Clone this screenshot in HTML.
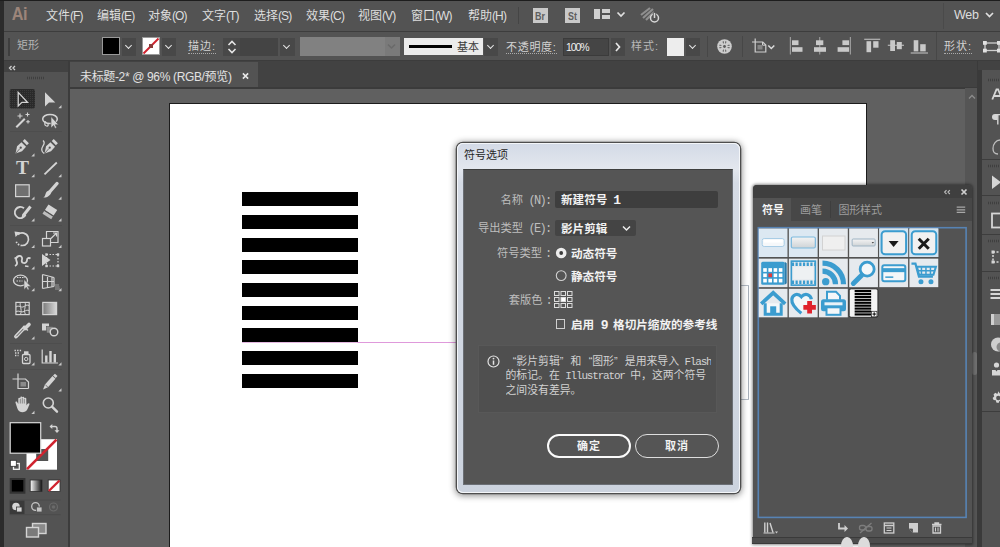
<!DOCTYPE html>
<html lang="zh-CN">
<head>
<meta charset="utf-8">
<title>Illustrator - 符号选项</title>
<style>
html,body{margin:0;padding:0;}
body{width:1000px;height:547px;overflow:hidden;background:#5e5e5e;position:relative;
 font-family:"Liberation Sans","Noto Sans CJK SC",sans-serif;font-size:12px;color:#dcdcdc;}
.abs{position:absolute;}
.t{position:absolute;white-space:nowrap;line-height:1;}
svg{position:absolute;overflow:visible;}
/* ---------- frame ---------- */
#menubar{left:0;top:0;width:1000px;height:31px;background:#535353;}
#ctrlbar{left:0;top:31px;width:1000px;height:30px;background:#535353;border-top:1px solid #3d3d3d;box-sizing:border-box;}
#tabbar{left:68px;top:61px;width:932px;height:27px;background:#424242;}
#doctab{left:70px;top:62px;width:188px;height:26px;background:#535353;}
#canvas{left:70px;top:88px;width:895px;height:459px;background:#606060;}
#artboard{left:168.500px;top:102.500px;width:696.800px;height:460px;background:#fff;border:1px solid #1c1c1c;}
#toolbar{left:4px;top:61px;width:64px;height:486px;background:#535353;}
#toolhead{left:4px;top:61px;width:64px;height:11px;background:#424242;}
.mi{top:10px;font-size:12px;color:#dedede;}
.la{font-size:12px;letter-spacing:-0.9px;}
.cl{font-size:11px;color:#d2d2d2;top:40px;letter-spacing:1px;}
.dd{position:absolute;top:38px;width:14px;height:18px;background:#484848;}
.dd:after{content:"";position:absolute;left:4px;top:5px;width:4px;height:4px;border-right:1.6px solid #e6e6e6;border-bottom:1.6px solid #e6e6e6;transform:rotate(45deg);}
.bar{position:absolute;left:242.3px;width:115.3px;height:14.2px;background:#000;}
/* ---------- dialog ---------- */
#dlg{left:456.500px;top:142.500px;width:283.500px;height:350px;border-radius:6px;background:linear-gradient(#d3dae6,#e3e7ee 26px,#d5dbe5 40px,#ccd3de);
 box-shadow:0 0 0 1.300px #4e4e4e,inset 0 0 0 1px #f4f6f9,0 1px 6px 1.500px rgba(0,0,0,.42);}
#dlgin{left:463px;top:169px;width:270px;height:316px;background:#555;border:1px solid #6b6f75;border-top-color:#3e3e3e;box-sizing:border-box;}
.dl{font-size:11.250px;color:#bebebe;}
.dv{font-size:11.600px;color:#f2f2f2;font-weight:bold;}
.mn{font-family:"Liberation Mono",monospace;font-size:12px;letter-spacing:-1.700px;line-height:0;}
.dv .mn{font-size:13px;letter-spacing:-2px;}
.di{font-size:10.850px;line-height:14.300px;color:#d2d2d2;white-space:nowrap;}
.di .mn{font-size:11px;letter-spacing:-1.180px;line-height:0;}
.di .q{display:inline-block;width:10.850px;text-align:right;}
.di .q.l{text-align:left;}
.btn{position:absolute;top:434.300px;height:23.500px;box-sizing:border-box;border-radius:12px;color:#f2f2f2;text-align:center;line-height:20px;font-size:11px;font-weight:bold;letter-spacing:1px;}
/* ---------- symbols panel ---------- */
#sp{left:752.500px;top:185px;width:219px;height:358.500px;background:#535353;border-radius:4px 4px 0 0;box-shadow:0 0 3px 0.5px rgba(0,0,0,.45);}
#sphead{left:752.500px;top:185px;width:219px;height:13.500px;background:#3f3f3f;border-radius:4px 4px 0 0;}
#sptabs{left:752.500px;top:198px;width:219px;height:23px;background:#474747;}
#sptab1{left:752.500px;top:198px;width:38.500px;height:23px;background:#535353;}
.cell{position:absolute;width:28.5px;height:28.5px;background:#e9e9e9;}
/* ---------- dock ---------- */
#dockgap{left:977px;top:61px;width:5px;height:486px;background:#3a3a3a;}
#dock{left:982px;top:70px;width:18px;height:477px;background:#535353;}
</style>
</head>
<body>
<!-- FRAME -->
<div class="abs" id="canvas"></div>
<div class="abs" id="artboard"></div>
<div class="abs" id="menubar"></div>
<div class="abs" id="ctrlbar"></div>
<div class="abs" id="tabbar"></div>
<div class="abs" id="doctab"></div>
<div class="abs" id="toolbar"></div>
<div class="abs" id="toolhead"></div>
<div class="abs" style="left:0;top:0;width:4px;height:547px;background:#2b2b2b"></div>
<div class="abs" style="left:0;top:0;width:1000px;height:1px;background:#1d1d1d"></div>
<div class="abs" style="left:70px;top:87.300px;width:908px;height:1.400px;background:#3b3b3b"></div>
<div class="abs" style="left:4px;top:59.500px;width:996px;height:1.500px;background:#3c3c3c"></div>
<div class="abs" style="left:68px;top:61px;width:2px;height:486px;background:#3c3c3c"></div>
<!-- MENUBAR -->
<div class="t" style="left:11px;top:4.500px;font-size:18px;font-weight:bold;color:#9c857a;letter-spacing:-0.5px;transform:scaleX(.9)">Ai</div>
<div class="t mi" style="left:46px">文件<span class="la">(F)</span></div>
<div class="t mi" style="left:97px">编辑<span class="la">(E)</span></div>
<div class="t mi" style="left:148px">对象<span class="la">(O)</span></div>
<div class="t mi" style="left:202px">文字<span class="la">(T)</span></div>
<div class="t mi" style="left:254px">选择<span class="la">(S)</span></div>
<div class="t mi" style="left:306px">效果<span class="la">(C)</span></div>
<div class="t mi" style="left:358px">视图<span class="la">(V)</span></div>
<div class="t mi" style="left:411px">窗口<span class="la">(W)</span></div>
<div class="t mi" style="left:468px">帮助<span class="la">(H)</span></div>
<div class="abs" style="left:518px;top:7px;width:1px;height:17px;background:#454545"></div>
<div class="abs" style="left:533px;top:8px;width:15px;height:15px;background:#c9c9c9"></div>
<div class="t" style="left:535px;top:10.500px;font-size:10.500px;font-weight:bold;color:#5e5e5e;transform:scaleX(.85);transform-origin:0 0">Br</div>
<div class="abs" style="left:565px;top:8px;width:15px;height:15px;background:#c9c9c9"></div>
<div class="t" style="left:568px;top:10.500px;font-size:10.500px;font-weight:bold;color:#5e5e5e;transform:scaleX(.85);transform-origin:0 0">St</div>
<svg style="left:594px;top:9px" width="34" height="12" viewBox="0 0 34 12"><rect x="0" y="0" width="6" height="10" fill="#d0d0d0"/><rect x="8" y="0" width="8" height="4" fill="#d0d0d0"/><rect x="8" y="6" width="8" height="4" fill="#d0d0d0"/><path d="M23.5 3.5l3.5 3.5 3.5-3.5" fill="none" stroke="#e0e0e0" stroke-width="1.7"/></svg>
<svg style="left:640px;top:6px" width="24" height="20" viewBox="0 0 24 20"><path d="M1 9L10 2M3 12L13 3M6 14L14 6" stroke="#8f8f8f" stroke-width="2.2" fill="none"/><circle cx="14.5" cy="12" r="4" fill="#535353" stroke="#d8d8d8" stroke-width="1.5"/><path d="M14.5 6.5v5" stroke="#535353" stroke-width="3.5"/><path d="M14.5 7v5" stroke="#d8d8d8" stroke-width="1.5"/></svg>
<div class="abs" style="left:943px;top:3px;width:1px;height:26px;background:#4a4a4a"></div>
<div class="t" style="left:954px;top:8.500px;font-size:12.500px;color:#dedede;letter-spacing:-.3px">Web</div>
<svg style="left:985px;top:11px" width="10" height="8" viewBox="0 0 10 8"><path d="M1 2l3.5 3.5L8 2" fill="none" stroke="#e0e0e0" stroke-width="1.7"/></svg>
<!-- CTRLBAR -->
<div class="abs" style="left:8px;top:38px;width:2px;height:18px;background:#3e3e3e"></div>
<div class="t" style="left:17px;top:40px;font-size:11px;color:#b4b4b4">矩形</div>
<div class="abs" style="left:102px;top:37px;width:18px;height:18px;background:#000;border:1px solid #9a9a9a;box-sizing:border-box"></div>
<div class="dd" style="left:122px"></div>
<div class="abs" style="left:142px;top:37px;width:18px;height:18px;background:#fff;border:1px solid #9a9a9a;box-sizing:border-box"></div>
<svg style="left:142px;top:37px" width="18" height="18" viewBox="0 0 18 18"><path d="M1.5 16.5L16.5 1.5" stroke="#d0232f" stroke-width="2"/><rect x="7" y="7" width="4" height="4" fill="#8a3a3a"/></svg>
<div class="dd" style="left:162px"></div>
<div class="t cl" style="left:188px;top:41px;border-bottom:1px dotted #aaa;padding-bottom:1px">描边:</div>
<div class="abs" style="left:223px;top:38px;width:17px;height:18px;background:#484848"></div>
<svg style="left:227px;top:40px" width="10" height="14" viewBox="0 0 10 14"><path d="M1.5 5L5 1.5 8.5 5M1.5 9L5 12.5 8.5 9" fill="none" stroke="#e6e6e6" stroke-width="1.6"/></svg>
<div class="abs" style="left:240px;top:38px;width:38px;height:18px;background:#444"></div>
<div class="dd" style="left:280px;width:15px"></div>
<div class="abs" style="left:300px;top:37px;width:100px;height:19px;background:#818181"></div>
<div class="abs" style="left:385px;top:37px;width:15px;height:19px;background:#7a7a7a"></div>
<svg style="left:387px;top:43px" width="10" height="8" viewBox="0 0 10 8"><path d="M1 1.5l3.5 3.5L8 1.5" fill="none" stroke="#6a6a6a" stroke-width="1.5"/></svg>
<div class="abs" style="left:404px;top:38px;width:79px;height:17px;background:#ebebeb"></div>
<div class="abs" style="left:409px;top:45px;width:43px;height:3px;background:#000"></div>
<div class="t" style="left:457px;top:42px;font-size:11px;color:#3c3c3c">基本</div>
<div class="dd" style="left:484px"></div>
<div class="t cl" style="left:506px;top:41.500px;letter-spacing:.7px;border-bottom:1px dotted #aaa;padding-bottom:.5px">不透明度:</div>
<div class="abs" style="left:563px;top:38px;width:46px;height:18px;background:#454545;border:1px solid #3b3b3b;box-sizing:border-box"></div>
<div class="t" style="left:566px;top:41.500px;font-size:10.500px;color:#f0f0f0;letter-spacing:-1.100px">100%</div>
<div class="abs" style="left:611px;top:38px;width:14px;height:18px;background:#484848"></div>
<svg style="left:614px;top:42px" width="8" height="10" viewBox="0 0 8 10"><path d="M2 1l3.5 4L2 9" fill="none" stroke="#e6e6e6" stroke-width="1.7"/></svg>
<div class="t cl" style="left:631px;top:41px;color:#b8b8b8">样式:</div>
<div class="abs" style="left:667px;top:38px;width:17px;height:18px;background:#ededed"></div>
<div class="dd" style="left:686px"></div>
<div class="abs" style="left:707px;top:36px;width:1px;height:21px;background:#474747"></div>
<svg style="left:716.500px;top:38.500px" width="15" height="15" viewBox="0 0 16 16"><circle cx="8" cy="8" r="7.800" fill="#cdcdcd"/><g fill="#5a5a5a"><circle cx="8" cy="8" r="1.500"/><path d="M6.900 5.400L5.800 3A5.500 5.500 0 0 1 7.500 2.500zM9.100 5.400L10.200 3A5.500 5.500 0 0 0 8.500 2.500zM5.400 6.900L3 5.800A5.500 5.500 0 0 0 2.500 7.500zM10.600 6.900L13 5.800A5.500 5.500 0 0 1 13.500 7.500zM5.400 9.100L3 10.200A5.500 5.500 0 0 1 2.500 8.500zM10.600 9.100l2.400 1.100A5.500 5.500 0 0 0 13.500 8.500zM6.900 10.600L5.800 13A5.500 5.500 0 0 0 7.500 13.500zM9.100 10.600l1.100 2.400A5.500 5.500 0 0 1 8.500 13.500z"/></g></svg>
<div class="abs" style="left:742px;top:36px;width:1px;height:21px;background:#474747"></div>
<svg style="left:745px;top:30px" width="35" height="30" viewBox="745 30 35 30"><path d="M755.200 38.500V52h10.600V45l-3-3H752" fill="none" stroke="#cfcfcf" stroke-width="1.200"/><path d="M762.500 42v3.200h3.300" fill="none" stroke="#cfcfcf" stroke-width="1"/><rect x="757.500" y="45" width="5" height="4.500" fill="#858585"/><path d="M768.300 45.500l3 3 3-3" fill="none" stroke="#dcdcdc" stroke-width="1.500"/></svg>
<!-- align icons -->
<svg style="left:780px;top:30px" width="160" height="30" viewBox="780 30 160 30" fill="#c9c9c9">
<rect x="789.800" y="37" width="1.200" height="17.500" fill="#9a9a9a"/><rect x="792" y="40.300" width="6.500" height="4.800"/><rect x="792" y="47.200" width="10.500" height="4.600"/>
<rect x="819.100" y="37" width="1.200" height="17.500" fill="#9a9a9a"/><rect x="816" y="40.300" width="7.300" height="4.800"/><rect x="814" y="47.200" width="12" height="4.600"/>
<rect x="849.800" y="37" width="1.200" height="17.500" fill="#9a9a9a"/><rect x="842.400" y="40.300" width="6.700" height="4.800"/><rect x="837.600" y="47.200" width="11.500" height="4.600"/>
<rect x="864.200" y="38.700" width="16" height="1.200" fill="#b5b5b5"/><rect x="866.500" y="41.200" width="4.600" height="11"/><rect x="873.200" y="41.200" width="5.300" height="6.500"/>
<rect x="887.800" y="44.700" width="16.200" height="1.200" fill="#b5b5b5"/><rect x="890.200" y="40.200" width="4.800" height="10.800"/><rect x="896.800" y="42" width="5" height="7.200"/>
<rect x="910.700" y="52.400" width="17.300" height="1.200" fill="#b5b5b5"/><rect x="913.700" y="40.200" width="4.600" height="11.200"/><rect x="920.200" y="44.200" width="5.500" height="7.200"/>
</svg>
<div class="abs" style="left:936px;top:32px;width:1px;height:28px;background:#474747"></div>
<div class="t cl" style="left:944px;top:41px;border-bottom:1px dotted #aaa;padding-bottom:1px">形状:</div>
<svg style="left:983px;top:40.500px" width="18" height="11.500" viewBox="0 0 18 11.500"><rect x="2" y="2" width="14" height="7.500" fill="none" stroke="#cfcfcf" stroke-width="1.300"/><g fill="#e2e2e2"><rect x="0" y="0" width="3.800" height="3.800"/><rect x="14" y="0" width="3.800" height="3.800"/><rect x="0" y="7.700" width="3.800" height="3.800"/><rect x="14" y="7.700" width="3.800" height="3.800"/></g></svg>
<!-- doc tab -->
<div class="t" style="left:80px;top:70.500px;font-size:12px;color:#e2e2e2;letter-spacing:-0.35px">未标题-2* @ 96% (RGB/预览)</div>
<svg style="left:241.500px;top:72px" width="7" height="8" viewBox="0 0 8 8"><path d="M1 1l6 6M7 1L1 7" stroke="#e8e8e8" stroke-width="1.8"/></svg>
<!-- TOOLS -->
<svg style="left:0;top:60px" width="72" height="487" viewBox="0 60 72 487" fill="none" stroke-linecap="butt">
<defs>
<pattern id="dots" width="2" height="2" patternUnits="userSpaceOnUse"><rect width="2" height="2" fill="#2a2a2a"/><rect width="1" height="1" fill="#3a3a3a"/></pattern>
<linearGradient id="gr1" x1="0" x2="1" y1="0" y2="0"><stop offset="0" stop-color="#7a7a7a"/><stop offset="1" stop-color="#d8d8d8"/></linearGradient>
<linearGradient id="gr2" x1="0" x2="1" y1="0" y2="0"><stop offset="0" stop-color="#fff"/><stop offset="1" stop-color="#111"/></linearGradient>
</defs>
<!-- header chevrons + grip -->
<path d="M11.500 66l-2 2 2 2M15 66l-2 2 2 2" stroke="#cfcfcf" stroke-width="1.300"/>
<path d="M27 78h18" stroke="#3f3f3f" stroke-width="2.500" stroke-dasharray="1 1"/>
<!-- row1 -->
<rect x="9.700" y="89" width="25.300" height="19.600" rx="2" fill="url(#dots)"/>
<path d="M18.200 92.300V106l3.700-3.600h5.600z" stroke="#d4d4d4" stroke-width="1.300" stroke-linejoin="miter"/>
<path d="M45 92.300V106.500l4-4h6.300z" fill="#d4d4d4"/><path d="M61.5 105.1V108.3H58.3Z" fill="#c8c8c8"/>
<!-- row2 wand / lasso -->
<path d="M16.300 127.300l8.500-8.500" stroke="#d4d4d4" stroke-width="2"/>
<path d="M20 113.500v5M17.500 116h5M27.500 112.500v4M25.500 114.500h4M28 120v3.600M26.200 121.800h3.600" stroke="#d4d4d4" stroke-width="1.100"/>
<ellipse cx="50" cy="119" rx="7.300" ry="4.600" stroke="#d4d4d4" stroke-width="1.500"/>
<path d="M46 121.500c-2 1.500-1.500 4 0.500 4.500s2.500-2 0.500-2.500" stroke="#d4d4d4" stroke-width="1.200"/>
<path d="M51 116.500V128l2.600-2.600 1.600 3 1.500-.8-1.500-2.900h3.300z" fill="#d4d4d4" stroke="#535353" stroke-width=".6"/>
<path d="M10 131.500h52" stroke="#4d4d4d" stroke-width="1"/>
<!-- row3 pen / curvature -->
<g transform="translate(15.500 153.500) scale(.87) translate(-15.500 -154)"><path d="M15.500 154l1.800-8.300 5-4.700 5.300 5.300-4.600 5z" fill="#d4d4d4"/><path d="M23.800 139.700l2.300-2.300 4.800 4.800-2.300 2.300z" fill="#d4d4d4"/><circle cx="21.500" cy="147.300" r="1.300" fill="#535353"/><path d="M15.800 153.700l4.800-5.400" stroke="#535353" stroke-width=".9"/></g><path d="M34.500 153.300V156.500H31.300Z" fill="#c8c8c8"/>
<g transform="translate(44.500 153.500) scale(.87) translate(-15.500 -154)"><path d="M15.500 154l1.800-8.300 5-4.700 5.300 5.300-4.600 5z" fill="#d4d4d4"/><path d="M23.800 139.700l2.300-2.300 4.800 4.800-2.300 2.300z" fill="#d4d4d4"/><circle cx="21.500" cy="147.300" r="1.300" fill="#535353"/><path d="M15.800 153.700l4.800-5.400" stroke="#535353" stroke-width=".9"/></g>
<path d="M43 140.500c2.500 2 1 4-0.300 6s-1.700 5 1.500 7" stroke="#d4d4d4" stroke-width="1.300"/>
<!-- row4 T / line -->
<path d="M44.500 174.300l12.300-11.800" stroke="#d4d4d4" stroke-width="1.800"/><path d="M34.5 174.0V177.2H31.3Z" fill="#c8c8c8"/><path d="M61.5 174.0V177.2H58.3Z" fill="#c8c8c8"/>
<!-- row5 rect / brush -->
<rect x="15.600" y="184.800" width="13.600" height="11.800" fill="#707070" stroke="#d4d4d4" stroke-width="1.200"/><path d="M34.5 196.6V199.8H31.3Z" fill="#c8c8c8"/>
<path d="M57 183.500l-7 8" stroke="#d4d4d4" stroke-width="3.400" stroke-linecap="round"/><path d="M49.500 190.500l1.800 1.800c-1 3.500-4.500 5.700-8 5.200 1.800-1 1.800-2.500 2.500-4.300s2-2.700 3.700-2.700z" fill="#d4d4d4"/><path d="M61.5 196.6V199.8H58.3Z" fill="#c8c8c8"/>
<!-- row6 shaper / eraser -->
<path d="M24 208.300a5.600 5.600 0 1 0 1.500 6.500" stroke="#d4d4d4" stroke-width="1.800"/>
<path d="M30.500 206.500l-7.200 9" stroke="#d4d4d4" stroke-width="3"/><path d="M22.300 214.300l2.400 1.900-3.300 1.700z" fill="#d4d4d4"/><path d="M34.5 218.3V221.5H31.3Z" fill="#c8c8c8"/>
<path d="M48.500 204.500l8.700 5.500-3.600 5.600-8.700-5.500z" fill="#d4d4d4"/><path d="M44.200 211.100l8.700 5.500-1.700 2.600-8.700-5.500z" fill="#bdbdbd"/><path d="M44.600 210.500l8.700 5.500" stroke="#535353" stroke-width=".7"/><path d="M61.5 218.3V221.5H58.3Z" fill="#c8c8c8"/>
<path d="M10 225.500h52" stroke="#4d4d4d" stroke-width="1"/>
<!-- row7 rotate / scale -->
<path d="M18 234.500a6.300 6.300 0 1 1 4 11" stroke="#d4d4d4" stroke-width="1.700"/><path d="M22 245.500a6.300 6.300 0 0 1-6-4.500" stroke="#d4d4d4" stroke-width="1.700" stroke-dasharray="1.500 1.300"/><path d="M14.500 231.500l5.800.8-4.700 4.600z" fill="#d4d4d4"/><path d="M34.5 244.8V248H31.3Z" fill="#c8c8c8"/>
<rect x="42.500" y="238.500" width="8" height="7.500" stroke="#d4d4d4" stroke-width="1.200"/><path d="M46.500 238v-6.500H58v11h-7" stroke="#d4d4d4" stroke-width="1.200"/><path d="M51 238.500l5-5M53 233h3.500v3.500" stroke="#d4d4d4" stroke-width="1.200"/><path d="M61.5 244.8V248H58.3Z" fill="#c8c8c8"/>
<!-- row8 warp / free transform -->
<path d="M15 266c2-1 2.500-3 1.500-5s0-4.500 2.500-5 3.500 2 3 3.500-0.500 3 1.500 3.500 3.500-1 3.500-3 2-2.500 3.500-1.500" stroke="#d4d4d4" stroke-width="1.800"/><path d="M14.500 258.500l3-1.500M25 266l3.500.5" stroke="#d4d4d4" stroke-width="1.500"/><path d="M34.5 266.3V269.5H31.3Z" fill="#c8c8c8"/>
<rect x="46.500" y="254.500" width="11.500" height="11.500" stroke="#d4d4d4" stroke-width="1.200" stroke-dasharray="1.500 1.500"/><g fill="#d4d4d4"><rect x="45.300" y="253.300" width="2.400" height="2.400"/><rect x="56.800" y="253.300" width="2.400" height="2.400"/><rect x="45.300" y="264.800" width="2.400" height="2.400"/><rect x="56.800" y="264.800" width="2.400" height="2.400"/><path d="M42 254v12l8.500-6z"/></g>
<!-- row9 shape builder / perspective -->
<ellipse cx="20.500" cy="280.500" rx="7" ry="5.300" stroke="#d4d4d4" stroke-width="1.300"/><path d="M17 277.500h8M16.500 281h6" stroke="#d4d4d4" stroke-width="1" stroke-dasharray="1.500 1"/><path d="M24 279.500V289.500l2.300-2.300 1.500 2.800 1.400-.7-1.500-2.800h3.200z" fill="#d4d4d4" stroke="#535353" stroke-width=".5"/><path d="M34.5 288.1V291.3H31.3Z" fill="#c8c8c8"/>
<path d="M42.500 274.500v14M47.500 275.500v12M52 277v10M42.500 274.500l11.500 3M42.500 281.500h12M42.500 288.500l11.500-2M54 277.500v9" stroke="#d4d4d4" stroke-width="1.200"/><path d="M55 285h4M55 287h4.500M55 289h5" stroke="#9a9a9a" stroke-width="1"/><path d="M61.5 288.1V291.3H58.3Z" fill="#c8c8c8"/>
<!-- row10 mesh / gradient -->
<rect x="15.900" y="302.400" width="13.300" height="12.200" stroke="#d4d4d4" stroke-width="1.200"/><path d="M16 307c3-2.500 5 1.500 8-0.500s3.500-1.500 5-1M16 311.500c3-1.500 5.500 1.500 8 0s3.500-1.500 5-1M20.500 302.500c-1.500 3.500 2 6 0 12M25 302.500c1.500 3.500-2 7.500 0.500 12" stroke="#d4d4d4" stroke-width="1"/>
<rect x="42.800" y="302.400" width="13.800" height="12.200" fill="url(#gr1)" stroke="#d4d4d4" stroke-width="1.200"/>
<!-- row11 eyedropper / blend -->
<path d="M16 336.500l8.500-9" stroke="#d4d4d4" stroke-width="3.800" stroke-linecap="round"/><path d="M16.300 336.300l7.700-8" stroke="#535353" stroke-width="1"/><path d="M23.300 326l4.500 4.500" stroke="#d4d4d4" stroke-width="1.600"/><path d="M25 328.500l4-4" stroke="#d4d4d4" stroke-width="3.600" stroke-linecap="round"/><path d="M34.5 336.3V339.5H31.3Z" fill="#c8c8c8"/>
<rect x="42" y="323.500" width="7" height="7" fill="#d4d4d4"/><rect x="46.500" y="326.500" width="6.500" height="6.500" fill="#8d8d8d" stroke="#535353" stroke-width=".6"/><circle cx="54" cy="332" r="3.800" stroke="#d4d4d4" stroke-width="1.400" fill="#535353"/>
<path d="M10 343.500h52" stroke="#4d4d4d" stroke-width="1"/>
<!-- row12 sprayer / graph -->
<rect x="22.500" y="354.500" width="7.500" height="9" rx="1" stroke="#d4d4d4" stroke-width="1.300"/><rect x="24" y="351.300" width="4.500" height="3" fill="#d4d4d4"/><circle cx="26.200" cy="359" r="1.700" stroke="#d4d4d4" stroke-width="1"/><path d="M14.500 350.500h7M15 353h5M15 355.500h3.500" stroke="#d4d4d4" stroke-width="1.400" stroke-dasharray="1.400 1.200"/><path d="M34.5 362.3V365.5H31.3Z" fill="#c8c8c8"/>
<path d="M42.200 349.500V363H58" stroke="#d4d4d4" stroke-width="1.200"/><path d="M46.300 362.500v-7M50.500 362.500v-11.500M54.800 362.500v-8.500" stroke="#d4d4d4" stroke-width="2.400"/><path d="M61.5 362.3V365.5H58.3Z" fill="#c8c8c8"/>
<path d="M10 369.500h52" stroke="#4d4d4d" stroke-width="1"/>
<!-- row13 artboard / slice -->
<path d="M18 373.500v15h10.500M12.500 379h13l3 3v6.500" stroke="#d4d4d4" stroke-width="1.200"/><rect x="20.500" y="382" width="5.500" height="4.500" fill="#8a8a8a"/>
<path d="M43 389.500l2-5 7.500-8.500 3 2.700-7.500 8.500z" fill="#d4d4d4"/><path d="M53 375.500l2-1.800 2.500 2.300-1.800 2z" fill="#d4d4d4"/><path d="M45.500 385l2.300 2" stroke="#535353" stroke-width=".8"/><path d="M61.5 388.3V391.5H58.3Z" fill="#c8c8c8"/>
<!-- row14 hand / zoom -->
<path d="M18.300 404v-5.200a1 1 0 0 1 2 0v-1.300a1 1 0 0 1 2 0v.3a1 1 0 0 1 2 0v1a1 1 0 0 1 2 0v2.200l.2 4.500c1-1.800 2-2.500 2.800-2 .6.500-.3 2-1.300 4.500-.8 2.200-2.300 4.200-5.200 4.200s-4.700-1.500-5.500-4l-1.800-5.500c-.3-1 1-1.600 1.600-.6z" fill="#d4d4d4"/><path d="M20.300 399v4.500M22.300 398v5.500M24.300 399v4.500" stroke="#535353" stroke-width=".6"/><path d="M34.5 410.7V413.9H31.3Z" fill="#c8c8c8"/>
<circle cx="48.300" cy="403" r="5" stroke="#d4d4d4" stroke-width="1.600"/><path d="M52 406.700l5 5" stroke="#d4d4d4" stroke-width="2.400" stroke-linecap="round"/>
<!-- fill / stroke -->
<rect x="26.500" y="439.200" width="30.500" height="30.500" fill="#fff"/><rect x="36.200" y="449" width="12" height="12" fill="#535353"/><path d="M27 469.200L56.500 439.700" stroke="#d0232f" stroke-width="2.600"/>
<rect x="10.200" y="422.700" width="30.500" height="30.500" fill="#000" stroke="#dadada" stroke-width="1.200"/>
<path d="M50.500 426.500h4.500a2 2 0 0 1 2 2v3" stroke="#d4d4d4" stroke-width="1.400"/><path d="M52.300 424l-2.800 2.500 2.800 2.500zM54.500 430.200l2.500 2.800 2.500-2.800z" fill="#d4d4d4"/>
<rect x="13.500" y="463.500" width="5.800" height="5.800" fill="#535353" stroke="#f0f0f0" stroke-width="1.300"/><rect x="10.300" y="460.300" width="6" height="6" fill="#fff" stroke="#2b2b2b" stroke-width=".8"/>
<!-- mini swatches -->
<rect x="9.700" y="478" width="15.700" height="15.700" fill="#333"/><rect x="11.800" y="480" width="11.500" height="11.500" fill="#000"/>
<rect x="30.200" y="480" width="11.800" height="11.500" fill="url(#gr2)" stroke="#2e2e2e" stroke-width=".8"/>
<rect x="48.200" y="480" width="11.800" height="11.500" fill="#fff" stroke="#2e2e2e" stroke-width=".8"/><path d="M48.800 491L59.500 480.500" stroke="#d0232f" stroke-width="2.400"/>
<!-- draw modes -->
<rect x="9.700" y="500.500" width="14.800" height="13.800" fill="#3a3a3a"/>
<circle cx="16" cy="506.500" r="3.800" fill="#d6d6d6"/><rect x="16.500" y="507" width="5.500" height="5" fill="#d6d6d6" stroke="#3a3a3a" stroke-width=".8"/>
<circle cx="35.500" cy="506.500" r="3.800" stroke="#c4c4c4" stroke-width="1.300"/><rect x="36.500" y="507" width="5.500" height="5" fill="#c4c4c4" stroke="#535353" stroke-width=".8"/>
<circle cx="53.500" cy="507" r="4" stroke="#6a6a6a" stroke-width="1.200"/><circle cx="53.500" cy="507" r="1.800" fill="#6a6a6a"/>
<path d="M9.700 500h51M9.700 514.700h51" stroke="#4a4a4a" stroke-width=".8"/>
<!-- screen mode -->
<rect x="32.500" y="523.500" width="13.500" height="10" fill="#8a8a8a" stroke="#d4d4d4" stroke-width="1.400"/><rect x="26.500" y="527.500" width="12" height="9.500" fill="#7a7a7a" stroke="#d4d4d4" stroke-width="1.400"/>
</svg>
<div class="t" style="left:15.500px;top:158.300px;font-family:'Liberation Serif',serif;font-size:19.500px;font-weight:bold;color:#d4d4d4;width:14px;text-align:center">T</div>
<!-- ART -->
<div class="bar" style="top:192.30px"></div><div class="bar" style="top:214.95px"></div><div class="bar" style="top:237.60px"></div><div class="bar" style="top:260.25px"></div><div class="bar" style="top:282.90px"></div><div class="bar" style="top:305.55px"></div><div class="bar" style="top:328.20px"></div><div class="bar" style="top:350.85px"></div><div class="bar" style="top:373.50px"></div>
<div class="abs" style="left:357px;top:341.500px;width:100px;height:1px;background:#d77fd2;opacity:.8"></div>
<div class="abs" style="left:242px;top:341.500px;width:115px;height:1px;background:#c05fba;opacity:.45"></div>
<div class="abs" style="left:748px;top:285px;width:1px;height:115px;background:#a8b0ba"></div>
<div class="abs" style="left:740px;top:399px;width:9px;height:1px;background:#b4bcc6"></div>
<div class="abs" style="left:740px;top:285px;width:9px;height:1px;background:#b4bcc6"></div>
<!-- SCROLL/DOCK -->
<div class="abs" style="left:965px;top:88px;width:13px;height:459px;background:#555"></div>
<svg style="left:968px;top:94px" width="8" height="6" viewBox="0 0 8 6"><path d="M1 4.500l3-3 3 3" fill="none" stroke="#8c8c8c" stroke-width="1.300"/></svg>
<div class="abs" style="left:971.500px;top:352px;width:5px;height:23px;border-radius:2.500px;background:#6e6e6e"></div>
<div class="abs" id="dockgap"></div>
<div class="abs" id="dock"></div>
<div class="abs" style="left:978px;top:61px;width:22px;height:9px;background:#424242"></div>
<svg style="left:982px;top:70px" width="18" height="477" viewBox="982 70 18 477" fill="none">
<g stroke="#3f3f3f" stroke-width="2.500" stroke-dasharray="1 1"><path d="M988 80h12M988 166h12M988 203h12M988 241h12M988 278h12"/></g>
<g stroke="#3d3d3d" stroke-width="1"><path d="M982 159.500h18M982 195.500h18M982 234.500h18M982 271.500h18M982 411.500h18"/></g>
<path d="M992.300 99.500l4.200-10h1.600l4.200 10M994 96h6" stroke="#d6d6d6" stroke-width="1.800"/>
<path d="M997.500 114v6h-2.500a3 3 0 0 1 0-6z" fill="#d6d6d6"/><path d="M997.800 114v10.500M1000.800 114v10.500M995 114.600h7" stroke="#d6d6d6" stroke-width="1.400"/>
<path d="M1000 140c-4 0-7 4-7 8.500 0 3.500 2 5.500 5 5.500" stroke="#bdbdbd" stroke-width="1.300"/>
<path d="M992 175.500v13.500l9-6.750z" fill="#d6d6d6"/>
<rect x="992" y="213.500" width="12" height="14" stroke="#d6d6d6" stroke-width="1.800"/>
<rect x="993" y="252" width="10" height="10" stroke="#d6d6d6" stroke-width="1.500" stroke-dasharray="2 1.500"/><g fill="#d6d6d6"><rect x="991.500" y="250.500" width="3" height="3"/><rect x="991.500" y="260.500" width="3" height="3"/></g>
<path d="M990.500 290h10M990.500 294h10M990.500 298h10" stroke="#d6d6d6" stroke-width="1.800"/>
<rect x="991" y="314" width="10" height="11" fill="#9a9a9a"/><rect x="991" y="314" width="3" height="11" fill="#d0d0d0"/>
<circle cx="998" cy="344.500" r="7" fill="#cfcfcf"/><circle cx="1001" cy="347" r="4.500" fill="#8a8a8a"/>
<circle cx="996.500" cy="365" r="2.600" fill="#d6d6d6"/><path d="M992 375.500v-5.500h3.500l1 1.500 1-1.500h3.500v5.500z" fill="#d6d6d6"/>
<path d="M998.500 391.300l1 2 2.300-.5.300 2.200-2 1 .0 2.300 2 1-.3 2.200-2.300-.5-1 2-2.200-.6-.5-2.200-2.200-.2-1-2 1.600-1.600-.6-2.200 1.800-1.400 1.900 1.200z" fill="#d6d6d6"/><circle cx="998.300" cy="398" r="2.200" fill="#535353"/>
</svg>
<!-- DIALOG -->
<div class="abs" id="dlg"></div>
<div class="abs" id="dlgin"></div>
<div class="t" style="left:464px;top:150px;font-size:11px;color:#262626;letter-spacing:0">符号选项</div>
<div class="t dl" style="right:449.500px;top:194.500px">名称<span class="mn"> (N):</span></div>
<div class="abs" style="left:555px;top:190.500px;width:163px;height:17px;background:#3e3e3e;border-radius:2px"></div>
<div class="t dv" style="left:561px;top:194px">新建符号<span class="mn"> 1</span></div>
<div class="t dl" style="right:449.500px;top:222.500px">导出类型<span class="mn"> (E):</span></div>
<div class="abs" style="left:555px;top:219.500px;width:81px;height:16.500px;background:#444;border-radius:2px"></div>
<div class="t dv" style="left:561px;top:222.500px;">影片剪辑</div>
<svg style="left:622px;top:225px" width="9" height="7" viewBox="0 0 9 7"><path d="M1 1.500l3.500 3.500 3.500-3.500" fill="none" stroke="#ececec" stroke-width="1.500"/></svg>
<div class="t dl" style="right:449.500px;top:247.500px">符号类型<span class="mn" style="margin-left:3px">:</span></div>
<svg style="left:554px;top:246px" width="14" height="36" viewBox="554 246 14 36"><circle cx="561.200" cy="253" r="5.300" fill="#ededed"/><circle cx="561.200" cy="253" r="1.900" fill="#3a3a3a"/><circle cx="561.200" cy="275.600" r="4.900" fill="none" stroke="#d2d2d2" stroke-width="1.100"/></svg>
<div class="t dv" style="left:571px;top:248px;">动态符号</div>
<div class="t dv" style="left:571px;top:270.500px;">静态符号</div>
<div class="t dl" style="right:449px;top:294.500px">套版色<span class="mn" style="margin-left:3px">:</span></div>
<svg style="left:554px;top:291px" width="19" height="18" viewBox="0 0 19 18" fill="none" stroke="#dcdcdc" stroke-width="1"><rect x=".5" y=".5" width="4.500" height="4"/><rect x="7" y=".5" width="4.500" height="4"/><rect x="13.500" y=".5" width="4.500" height="4"/><rect x=".5" y="6.500" width="4.500" height="4"/><rect x="7" y="6.500" width="4.500" height="4" fill="#fff"/><rect x="13.500" y="6.500" width="4.500" height="4"/><rect x=".5" y="12.500" width="4.500" height="4"/><rect x="7" y="12.500" width="4.500" height="4"/><rect x="13.500" y="12.500" width="4.500" height="4"/></svg>
<div class="abs" style="left:555.700px;top:319.300px;width:9.700px;height:9.700px;box-sizing:border-box;border:1px solid #cfcfcf"></div>
<div class="t dv" style="left:571px;top:318.500px">启用 <span class="mn" style="display:inline-block;width:12.400px;text-align:center">9</span> 格切片缩放的参考线</div>
<div class="abs" style="left:477.500px;top:344.500px;width:239px;height:68px;background:#4f4f4f;border:1px solid #585858;box-sizing:border-box"></div>
<svg style="left:487px;top:355px" width="13" height="13" viewBox="0 0 13 13"><circle cx="6.500" cy="6.500" r="5.500" fill="none" stroke="#e2e2e2" stroke-width="1.200"/><path d="M6.500 5.500v4.300" stroke="#e2e2e2" stroke-width="1.500"/><circle cx="6.500" cy="3.600" r=".9" fill="#e2e2e2"/></svg>
<div class="abs di" style="left:505.500px;top:354px;width:205px;height:46px;overflow:hidden"><span class="q">“</span>影片剪辑<span class="q l">”</span>和<span class="q">“</span>图形<span class="q l">”</span>是用来导入<span class="mn"> Flash</span><br>的标记。在<span class="mn"> Illustrator </span>中，这两个符号<br>之间没有差异。</div>
<div class="btn" style="left:547px;width:84px;border:2px solid #fafafa;line-height:20.500px">确定</div>
<div class="btn" style="left:635px;width:84px;border:1.300px solid #dedede;line-height:22px">取消</div>
<!-- SYMBOLS -->
<div class="abs" id="sp"></div>
<div class="abs" id="sphead"></div>
<div class="abs" id="sptabs"></div>
<div class="abs" id="sptab1"></div>
<div class="t" style="left:762px;top:204.500px;font-size:11px;font-weight:bold;color:#f4f4f4">符号</div>
<div class="t" style="left:800px;top:204.500px;font-size:11px;color:#9d9d9d">画笔</div>
<div class="abs" style="left:830px;top:201px;width:1px;height:17px;background:#3e3e3e"></div>
<div class="t" style="left:838.500px;top:204.500px;font-size:11px;color:#9d9d9d;letter-spacing:-.2px">图形样式</div>
<svg style="left:752px;top:185px" width="220" height="352" viewBox="752 185 220 352" fill="none">
<defs><linearGradient id="bg1" x1="0" x2="0" y1="0" y2="1"><stop offset="0" stop-color="#f4f4f4"/><stop offset="1" stop-color="#cfd3d6"/></linearGradient></defs>
<path d="M946.500 190.200l-1.800 1.900 1.800 1.900M949.800 190.200l-1.800 1.900 1.800 1.900" stroke="#bdbdbd" stroke-width="1.200"/>
<path d="M961.500 189.500l5 5M966.500 189.500l-5 5" stroke="#cfcfcf" stroke-width="1.700"/>
<path d="M956.700 207.200h8.500M956.700 209.800h8.500M956.700 212.400h8.500" stroke="#a8a8a8" stroke-width="1.300"/>
<rect x="758.300" y="227.700" width="207.800" height="289.700" stroke="#5783b4" stroke-width="1.600"/>
<rect x="758.70" y="228.50" width="28.800" height="28.500" fill="#dce8f2"/><rect x="788.85" y="228.50" width="28.800" height="28.500" fill="#dce8f2"/><rect x="819.00" y="228.50" width="28.800" height="28.500" fill="#e6eaee"/><rect x="849.15" y="228.50" width="28.800" height="28.500" fill="#e6eaee"/><rect x="879.30" y="228.50" width="28.800" height="28.500" fill="#e6eaee"/><rect x="909.45" y="228.50" width="28.800" height="28.500" fill="#e6eaee"/><rect x="758.70" y="258.65" width="28.800" height="28.500" fill="#e6eaee"/><rect x="788.85" y="258.65" width="28.800" height="28.500" fill="#e6eaee"/><rect x="819.00" y="258.65" width="28.800" height="28.500" fill="#e6eaee"/><rect x="849.15" y="258.65" width="28.800" height="28.500" fill="#e6eaee"/><rect x="879.30" y="258.65" width="28.800" height="28.500" fill="#e6eaee"/><rect x="909.45" y="258.65" width="28.800" height="28.500" fill="#e6eaee"/><rect x="758.70" y="288.80" width="28.800" height="28.500" fill="#e6eaee"/><rect x="788.85" y="288.80" width="28.800" height="28.500" fill="#e6eaee"/><rect x="819.00" y="288.80" width="28.800" height="28.500" fill="#e6eaee"/>
<g transform="translate(758.70 228.50)"><rect x="3.500" y="10" width="22" height="8" rx="2" fill="#f6f8fa" stroke="#a9cde6" stroke-width="1"/><rect x="5" y="11.500" width="19" height="2.500" fill="#fff"/></g><g transform="translate(788.85 228.50)"><rect x="2.500" y="8.500" width="24" height="11" rx="1.500" fill="url(#bg1)" stroke="#7db9de" stroke-width="1.200"/></g><g transform="translate(819.00 228.50)"><rect x="3.500" y="7.500" width="22.500" height="14" fill="#efefef" stroke="#d2d2d2" stroke-width="1"/></g><g transform="translate(849.15 228.50)"><rect x="3" y="10.500" width="23" height="7" rx="1" fill="url(#bg1)" stroke="#9fb4c4" stroke-width="1"/><path d="M22.500 13.500l1.200 1.500 1.200-1.500z" fill="#444"/></g><g transform="translate(879.30 228.50)"><rect x="0" y="0" width="28.800" height="28.500" fill="#d3e5f2"/><rect x="2.300" y="2.800" width="24.500" height="23" rx="3.500" fill="#f1f1f1" stroke="#3b9ccf" stroke-width="2"/><path d="M9.300 12.500h10l-5 6z" fill="#1a1a1a"/></g><g transform="translate(909.45 228.50)"><rect x="0" y="0" width="28.800" height="28.500" fill="#d3e5f2"/><rect x="2.300" y="2.800" width="24.500" height="23" rx="3.500" fill="#f1f1f1" stroke="#3b9ccf" stroke-width="2"/><path d="M9.300 10.300l10 10M19.300 10.300l-10 10" stroke="#1a1a1a" stroke-width="3"/></g><g transform="translate(758.70 258.65)"><rect x="2.500" y="3" width="23.500" height="23" rx="1.500" fill="#3b9ccf"/><path d="M26 3l2 1.500v20l-2 1.500" fill="#2b7cab"/><g fill="#fff"><rect x="4.5" y="9.5" width="3.600" height="3.700" fill="#fff"/><rect x="4.5" y="14.8" width="3.600" height="3.700" fill="#fff"/><rect x="4.5" y="20.1" width="3.600" height="3.700" fill="#fff"/><rect x="9.7" y="9.5" width="3.600" height="3.700" fill="#fff"/><rect x="9.7" y="14.8" width="3.600" height="3.700" fill="#e23b3b"/><rect x="9.7" y="20.1" width="3.600" height="3.700" fill="#fff"/><rect x="14.9" y="9.5" width="3.600" height="3.700" fill="#fff"/><rect x="14.9" y="14.8" width="3.600" height="3.700" fill="#fff"/><rect x="14.9" y="20.1" width="3.600" height="3.700" fill="#fff"/><rect x="20.1" y="9.5" width="3.600" height="3.700" fill="#fff"/><rect x="20.1" y="14.8" width="3.600" height="3.700" fill="#fff"/><rect x="20.1" y="20.1" width="3.600" height="3.700" fill="#fff"/></g></g><g transform="translate(788.85 258.65)"><rect x="2.500" y="2.500" width="24" height="24" fill="none" stroke="#3b9ccf" stroke-width="1.600"/><path d="M3 5.500h23M3 23.500h23" stroke="#3b9ccf" stroke-width="3.500" stroke-dasharray="2.200 1.500"/><rect x="4.500" y="8.500" width="20" height="12" fill="#eef1f3"/></g><g transform="translate(819.00 258.65)"><circle cx="6.700" cy="23" r="3.700" fill="#3b9ccf"/><path d="M3.500 12.500a13 13 0 0 1 13 13M3.500 4.500a21 21 0 0 1 21 21" fill="none" stroke="#3b9ccf" stroke-width="5.200"/></g><g transform="translate(849.15 258.65)"><circle cx="18" cy="10.500" r="7" fill="#f4f7f9" stroke="#3b9ccf" stroke-width="2.800"/><path d="M12.500 16.500l-8.300 8.300" stroke="#3b9ccf" stroke-width="5" stroke-linecap="round"/></g><g transform="translate(879.30 258.65)"><rect x="3" y="6.500" width="23" height="16" rx="2" fill="#f4f7f9" stroke="#3b9ccf" stroke-width="2"/><rect x="3" y="9.500" width="23" height="4" fill="#3b9ccf"/><path d="M6 18.500h8" stroke="#3b9ccf" stroke-width="1.500"/></g><g transform="translate(909.45 258.65)"><path d="M2 5h4l3.500 13h14" fill="none" stroke="#3b9ccf" stroke-width="2.200"/><path d="M7.500 8h19l-2.500 8h-14.500z" fill="none" stroke="#3b9ccf" stroke-width="2"/><path d="M12 8.500v7.500M16.500 8.500v7.500M21 8.500v7.500M8.500 12h17" stroke="#3b9ccf" stroke-width="1.500"/><circle cx="11.500" cy="23" r="2.500" fill="#3b9ccf"/><circle cx="21.500" cy="23" r="2.500" fill="#3b9ccf"/></g><g transform="translate(758.70 288.80)"><path d="M2.500 15l12-11 12 11" fill="none" stroke="#3b9ccf" stroke-width="3.600" stroke-linejoin="miter"/><path d="M6.500 14.500v11h16v-11" fill="#f4f7f9" stroke="#3b9ccf" stroke-width="3"/><rect x="11.500" y="17.500" width="6" height="8.500" fill="#3b9ccf"/></g><g transform="translate(788.85 288.80)"><path d="M12.500 24.500C6 19.500 2.500 15 3 10.500 3.500 6 8.500 3.500 12.500 8c4-4.500 9.500-2 10 2.500" fill="#f4f7f9" stroke="#3b9ccf" stroke-width="3.200"/><path d="M14.500 18.500h12.500M20.750 12.300v12.500" stroke="#e0222c" stroke-width="4.800"/></g><g transform="translate(819.00 288.80)"><path d="M8 11v-8h9l4 4v4" fill="#f4f7f9" stroke="#3b9ccf" stroke-width="2"/><rect x="2" y="10.500" width="25" height="12" rx="2.500" fill="#3b9ccf"/><rect x="5.500" y="13.500" width="18" height="3" fill="#e9f2f8"/><rect x="7.500" y="18.500" width="14" height="7.500" fill="#f4f7f9" stroke="#3b9ccf" stroke-width="2"/></g><g transform="translate(849.15 288.80)"><rect x="0" y="0" width="28.800" height="28.500" rx="2" fill="#f4f4f4" stroke="#2c2c2c" stroke-width="1"/><rect x="5.500" y="1.20" width="16.500" height="2.150" fill="#000"/><rect x="5.500" y="4.12" width="16.500" height="2.150" fill="#000"/><rect x="5.500" y="7.04" width="16.500" height="2.150" fill="#000"/><rect x="5.500" y="9.96" width="16.500" height="2.150" fill="#000"/><rect x="5.500" y="12.88" width="16.500" height="2.150" fill="#000"/><rect x="5.500" y="15.80" width="16.500" height="2.150" fill="#000"/><rect x="5.500" y="18.72" width="16.500" height="2.150" fill="#000"/><rect x="5.500" y="21.64" width="16.500" height="2.150" fill="#000"/><rect x="5.500" y="24.56" width="16.500" height="2.150" fill="#000"/><rect x="22.300" y="22.500" width="5.500" height="5.500" fill="#fff" stroke="#222" stroke-width=".7"/><path d="M23.300 25.250h3.500M25.050 23.500v3.500" stroke="#000" stroke-width="1"/></g>
<!-- footer icons -->
<g stroke="#cfcfcf" stroke-width="1.400"><path d="M764.800 522.500v10M767.500 522.500v10M770 523l3 9.500"/><path d="M763.500 533h11" stroke-width="1"/></g><path d="M775 531.500h3l-1.500 2z" fill="#cfcfcf"/>
<path d="M839 523v5.500h7" stroke="#cfcfcf" stroke-width="1.800"/><path d="M844.500 525l3.500 3.500-3.500 3.500z" fill="#cfcfcf"/>
<g stroke="#7d7d7d" stroke-width="1.300"><rect x="859.500" y="525.500" width="6" height="4.500" rx="2"/><rect x="866" y="526.500" width="6" height="4.500" rx="2"/><path d="M860 533l11.500-10"/></g>
<rect x="884.300" y="523" width="9.500" height="10" stroke="#cfcfcf" stroke-width="1.300"/><path d="M884.300 525.500h9.500" stroke="#cfcfcf" stroke-width="1.500"/><path d="M886.500 528h5M886.500 530.500h5" stroke="#cfcfcf" stroke-width="1"/>
<path d="M909 523h9v9.500h-5.500l-3.500-3.500z" fill="#cfcfcf"/><path d="M909 529h3.500v3.500" fill="#535353" stroke="#535353" stroke-width=".8"/>
<path d="M932 524.500h9.500M935 524.500v-1.500h3.500v1.500" stroke="#cfcfcf" stroke-width="1.300"/><path d="M933 526h7.500v7h-7.500z" stroke="#cfcfcf" stroke-width="1.300"/><path d="M935.500 527.500v4M938 527.500v4" stroke="#cfcfcf" stroke-width="1"/>
</svg>
<div class="abs" style="left:752px;top:536.500px;width:220px;height:1px;background:#3a3a3a"></div>
<div class="abs" style="left:752px;top:537.500px;width:220px;height:5px;background:#4c4c4c"></div>
<div class="abs" style="left:752px;top:542.500px;width:220px;height:1.200px;background:#3a3a3a"></div>
<div class="abs" style="left:841px;top:536.500px;width:11.500px;height:18px;border-radius:50%;background:#dcdcdc"></div>
<div class="abs" style="left:858px;top:536.500px;width:11.500px;height:18px;border-radius:50%;background:#dcdcdc"></div>
</body>
</html>
